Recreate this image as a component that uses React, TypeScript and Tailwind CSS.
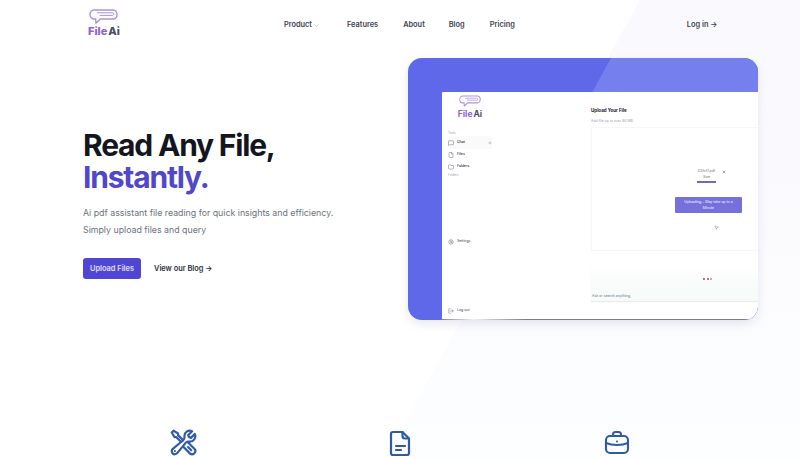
import { ChevronDown, Plus, X, MessageSquare, File, Folder, Settings, LogOut, MousePointer2 } from "lucide-react";
import { HiOutlineWrenchScrewdriver } from "react-icons/hi2";

function Bubble({ className }: { className: string }) {
  return (
    <svg viewBox="0 0 29 15" fill="none" className={className}>
      <path
        d="M5 1h19c2.200 0 4 1.900 4 4.500S26.200 10 24 10H11.500L7 14l-.4-4H5C2.800 10 1 8.100 1 5.500S2.800 1 5 1z"
        stroke="#ab93dd"
        strokeWidth="1.400"
      />
      <path d="M8 3.800h15.500a1.200 1.200 0 0 1 0 2.600H10.500" stroke="#ab93dd" strokeWidth="1" />
    </svg>
  );
}

function Logo({ small }: { small?: boolean }) {
  return (
    <div className="flex flex-col items-center">
      <Bubble className={small ? "w-[22px] h-[12px]" : "w-[29px] h-[15px]"} />
      <div className={small ? "text-[8.500px] leading-[10px] font-bold mt-[2px]" : "text-[11px] leading-[13px] font-extrabold mt-[1px]"}>
        <span className="text-[#8a63d2]">File</span>
        <span className="text-[#4b4b63] ml-[1px]">Ai</span>
      </div>
    </div>
  );
}

const sideItems = [
  { label: "Files", Icon: File },
  { label: "Folders", Icon: Folder },
];

function Mockup() {
  return (
    <div className="relative w-[350px] h-[262px] rounded-[14px] overflow-hidden bg-[#5f68e8] pt-[34px] pl-[34px] shadow-[0_4px_10px_rgba(120,130,160,0.18)]">
      {/* lighter diagonal */}
      <div className="absolute inset-0 bg-[#7580ee] [clip-path:polygon(203px_0,100%_0,100%_100%,60px_100%)]" />
      <div className="relative flex flex-col h-full bg-white rounded-tl-[1px]">
        <div className="flex flex-1 min-h-0">
          <div className="w-[149px] flex flex-col pl-[6px] pt-[3px] shrink-0">
            <div className="w-[44px]">
              <Logo small />
            </div>
            <div className="text-[3px] leading-[4px] text-gray-400 mt-[12px]">Tools</div>
            <div className="flex items-center h-[13px] w-[44px] rounded-[3px] bg-[#fafafa] mt-[1px]">
              <MessageSquare size={6} className="text-gray-500" />
              <span className="text-[3.500px] font-medium text-gray-800 ml-[3px]">Chat</span>
              <Plus size={4} className="text-gray-500 ml-auto" />
            </div>
            {sideItems.map(({ label, Icon }) => (
              <div key={label} className="flex items-center h-[12px]">
                <Icon size={6} className="text-gray-500" />
                <span className="text-[3.500px] font-medium text-gray-800 ml-[3px]">{label}</span>
              </div>
            ))}
            <div className="text-[3px] leading-[4px] text-gray-400">Folders</div>
            <div className="flex items-center mt-[62px]">
              <Settings size={6} className="text-gray-500" />
              <span className="text-[3.500px] text-gray-700 ml-[3px]">Settings</span>
            </div>
            <div className="flex items-center mt-auto mb-[5px]">
              <LogOut size={6} className="text-gray-500" />
              <span className="text-[3.500px] text-gray-700 ml-[3px]">Log out</span>
            </div>
          </div>
          <div className="flex-1 flex flex-col pt-[16px] min-w-0">
            <div className="text-[4.500px] leading-[6px] font-bold text-gray-900">Upload Your File</div>
            <div className="text-[3.500px] leading-[5px] text-gray-400 mt-[5px]">Add file up to max 90 MB</div>
            <div className="h-[124px] mt-[3px] border-l border-b border-t border-[#f7f7f9] flex flex-col items-end pr-[16px] pt-[40px]">
              <div className="flex items-start mr-[16px]">
                <div className="flex flex-col items-center w-[21px]">
                  <span className="text-[3.500px] leading-[6px] text-gray-500">D3fcf7.pdf</span>
                  <span className="text-[3.500px] leading-[6px] text-gray-500">Size</span>
                  <div className="w-[19px] h-[2px] bg-[#6f68c9] mt-[1px]" />
                </div>
                <X size={4} strokeWidth={3} className="text-gray-600 ml-[5px] mt-[2px]" />
              </div>
              <div className="w-[67px] h-[16px] mt-[14px] rounded-[1px] bg-[#7670dc] flex flex-col items-center justify-center text-[3.500px] leading-[6px] text-white/90">
                <span>Uploading... May take up to a</span>
                <span>Minute</span>
              </div>
              <MousePointer2 size={5} className="text-gray-500 mr-[23px] mt-[12px]" />
            </div>
            <div className="flex-1 flex flex-col bg-gradient-to-b from-white via-[#f8fcfb] to-[#f6fbfa] mt-[15px] mb-[18px] shadow-[0_1px_1px_rgba(0,0,0,0.08)]">
              <div className="flex justify-center gap-[1.500px] mt-[12px] ml-[66px]">
                <span className="w-[2px] h-[2px] rounded-full bg-[#a33d5c]" />
                <span className="w-[2px] h-[2px] rounded-full bg-[#a33d5c]" />
                <span className="w-[2px] h-[2px] rounded-full bg-[#c98da0]" />
              </div>
              <div className="text-[3.500px] leading-[5px] text-gray-500 mt-auto mb-[2px] ml-[1px]">Ask or search anything</div>
            </div>
          </div>
        </div>
        <div className="h-[1px] shrink-0 bg-gradient-to-r from-[#8a8a8a] via-[#f0f0f0] via-[10%] to-[#7d7d7d] to-[27%]" />
      </div>
    </div>
  );
}

export default function App() {
  return (
    <div className="relative w-[800px] h-[458px] overflow-hidden bg-white font-['Inter',sans-serif]">
      {/* page background wedge */}
      <div className="absolute inset-0 bg-gradient-to-b from-[#f9f9fe] via-[#fbfbfe] to-[#fdfeff] [clip-path:polygon(640px_0,100%_0,100%_100%,385px_100%)]" />

      <div className="relative flex flex-col h-full">
        <nav className="h-[50px] flex items-start shrink-0">
          <div className="ml-[88px] mt-[9px]">
            <Logo />
          </div>
          <div className="flex items-center ml-[164px] mt-[19px] text-[7.400px] leading-[12px] font-semibold text-[#3f4450]">
            <span>Product</span>
            <ChevronDown size={7} className="ml-[1px] text-gray-400" />
            <span className="ml-[27px]">Features</span>
            <span className="ml-[25px]">About</span>
            <span className="ml-[24px]">Blog</span>
            <span className="ml-[25px]">Pricing</span>
          </div>
          <div className="mt-[19px] ml-[172px] text-[7.400px] leading-[12px] font-semibold text-[#3f4450]">Log in →</div>
        </nav>

        <div className="flex items-start pl-[83px] h-[270px] shrink-0">
          <div className="w-[325px] shrink-0 pt-[80px]">
            <h1 className="text-[30px] leading-[31.500px] font-bold tracking-[-1.200px] text-[#14161f]">
              Read Any File,
              <br />
              <span className="text-[#5148c9]">Instantly.</span>
            </h1>
            <p className="mt-[11px] text-[8.800px] leading-[17px] text-[#6b7280]">
              Ai pdf assistant file reading for quick insights and efficiency.
              <br />
              Simply upload files and query
            </p>
            <div className="flex items-center mt-[20px]">
              <button className="w-[58px] h-[21px] rounded-[3px] bg-[#4f46d5] text-[7.400px] font-semibold text-white/80">
                Upload Files
              </button>
              <span className="ml-[13px] text-[7.400px] font-semibold text-[#2b2f3a]">View our Blog →</span>
            </div>
          </div>
          <div className="pt-[8px]">
            <Mockup />
          </div>
        </div>

        <div className="flex pl-[169px] mt-[109px] text-[#2f5aa8]">
          <HiOutlineWrenchScrewdriver size={29} strokeWidth={1.8} className="-mt-[1px]" />
          {/* file with folded corner */}
          <svg viewBox="0 0 24 28" fill="none" stroke="currentColor" strokeWidth="2.200" strokeLinecap="round" strokeLinejoin="round" className="w-[24px] h-[28px] ml-[190px]">
            <path d="M5 3h9.500L21 9.500V24a2 2 0 0 1-2 2H5a2 2 0 0 1-2-2V5a2 2 0 0 1 2-2z" />
            <path d="M14.500 3v4a2.500 2.500 0 0 0 2.500 2.500h4" />
            <path d="M8 17h9M8 21h5" />
          </svg>
          {/* briefcase */}
          <svg viewBox="0 0 26 26" fill="none" stroke="currentColor" strokeWidth="2.100" strokeLinecap="round" strokeLinejoin="round" className="w-[26px] h-[26px] ml-[192px]">
            <path d="M9 7V5.500A2.500 2.500 0 0 1 11.500 3h3A2.500 2.500 0 0 1 17 5.500V7" />
            <rect x="2" y="7" width="22" height="17" rx="4" />
            <path d="M2 14c3.500 1.500 7 2 11 2s7.500-.5 11-2" />
            <path d="M13 12.500v.01" />
          </svg>
        </div>
      </div>
    </div>
  );
}
